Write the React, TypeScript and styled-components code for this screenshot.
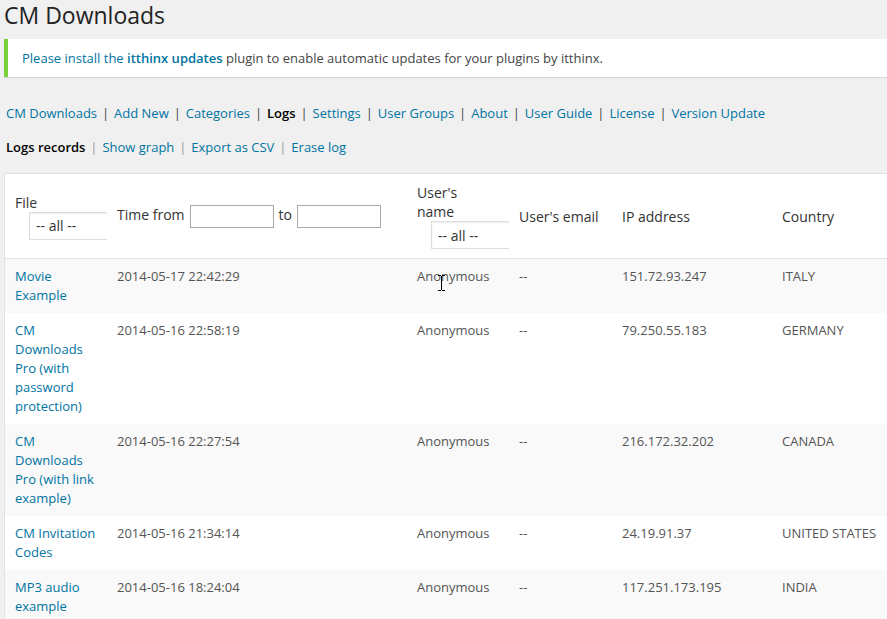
import React from "react";
import styled, { createGlobalStyle } from "styled-components";

const GlobalStyle = createGlobalStyle`
  *, *::before, *::after { box-sizing: border-box; }
  body {
    margin: 0;
    background: #f0f0f0;
    color: #444;
    font: 13px/19px "Open Sans", sans-serif;
    overflow: hidden;
  }
`;

const Page = styled.main`
  padding-left: 4px;
`;

const Title = styled.h1`
  margin: 0;
  padding-bottom: 8px;
  font-size: 23px;
  font-weight: 400;
  line-height: 31px;
  color: #222;
`;

const Link = styled.a`
  color: #0074a2;
  text-decoration: none;
  &:hover { color: #2ea2cc; }
`;

const Strong = styled.strong`
  font-weight: 600;
`;

const Notice = styled.p`
  margin: 0 0 27px;
  padding: 10px 14px 9px;
  border-left: 4px solid #7ad03a;
  background: #fff;
  box-shadow: 0 1px 1px rgba(0, 0, 0, 0.1);
`;

const Menu = styled.nav<{ $barColor: string }>`
  display: flex;
  margin: 0 2px 15px;
  color: ${(p) => p.$barColor};
`;

const Separator = styled.span`
  width: 17px;
  flex: none;
  text-align: center;
`;

const MenuLink = styled(Link)`
  white-space: nowrap;
  &[aria-current] {
    color: #000;
    font-weight: 600;
  }
`;

const LogTable = styled.table`
  width: 100%;
  margin-top: 16px;
  table-layout: fixed;
  border-spacing: 0;
  border: 1px solid #e1e1e1;
  border-right: 0;
  background: #fff;
`;

const Col = styled.col<{ $width?: number }>`
  width: ${(p) => (p.$width ? `${p.$width}px` : "auto")};
`;

const HeadCell = styled.th`
  overflow: hidden;
  padding: 9px 10px;
  border-bottom: 1px solid #e1e1e1;
  font-size: 14px;
  font-weight: 400;
  text-align: left;
  vertical-align: middle;
  color: #333;
`;

const Row = styled.tr`
  &:nth-child(odd) { background: #f9f9f9; }
`;

const Cell = styled.td`
  padding: 8px 10px;
  vertical-align: top;
  color: #555;
`;

const Filter = styled.select`
  display: block;
  appearance: none;
  width: 140px;
  height: 28px;
  margin-left: 14px;
  padding: 2px 6px;
  border: 1px solid #ddd;
  border-radius: 0;
  background: #fff;
  box-shadow: inset 0 1px 2px rgba(0, 0, 0, 0.07);
  font: inherit;
  color: #333;
`;

const TimeRange = styled.div`
  display: flex;
  align-items: center;
  gap: 5px;
  white-space: nowrap;
`;

const TimeLabel = styled.label`
  padding-bottom: 4px;
`;

const TimeInput = styled.input`
  width: 84px;
  height: 23px;
  padding: 1px 3px;
  border: 1px solid #a9a9a9;
  border-radius: 0;
  background: #fff;
  font: inherit;
`;

const Hovered = styled.span`
  position: relative;
`;

const TextCursor = styled.svg`
  position: absolute;
  left: 20px;
  top: 8px;
`;

const mainMenu = ["CM Downloads", "Add New", "Categories", "Logs", "Settings", "User Groups", "About", "User Guide", "License", "Version Update"];
const logMenu = ["Logs records", "Show graph", "Export as CSV", "Erase log"];

const records = [
  { file: "Movie Example", time: "2014-05-17 22:42:29", ip: "151.72.93.247", country: "ITALY" },
  { file: "CM Downloads Pro (with password protection)", time: "2014-05-16 22:58:19", ip: "79.250.55.183", country: "GERMANY" },
  { file: "CM Downloads Pro (with link example)", time: "2014-05-16 22:27:54", ip: "216.172.32.202", country: "CANADA" },
  { file: "CM Invitation Codes", time: "2014-05-16 21:34:14", ip: "24.19.91.37", country: "UNITED STATES" },
  { file: "MP3 audio example", time: "2014-05-16 18:24:04", ip: "117.251.173.195", country: "INDIA" },
];

function MenuBar({ items, current, barColor, label }: { items: string[]; current: string; barColor: string; label: string }) {
  return (
    <Menu $barColor={barColor} aria-label={label}>
      {items.map((item, i) => (
        <React.Fragment key={item}>
          {i > 0 && <Separator>|</Separator>}
          <MenuLink href="#" aria-current={item === current ? "page" : undefined}>{item}</MenuLink>
        </React.Fragment>
      ))}
    </Menu>
  );
}

export default function App() {
  return (
    <>
      <GlobalStyle />
      <Page>
        <Title>CM Downloads</Title>
        <Notice>
          <Link href="#">Please install the <Strong>itthinx updates</Strong></Link> plugin to enable automatic updates for your plugins by itthinx.
        </Notice>
        <MenuBar items={mainMenu} current="Logs" barColor="#444" label="Plugin" />
        <MenuBar items={logMenu} current="Logs records" barColor="#999" label="Logs" />
        <LogTable>
          <colgroup>
            <Col $width={102} />
            <Col $width={300} />
            <Col $width={102} />
            <Col $width={103} />
            <Col $width={160} />
            <Col />
          </colgroup>
          <thead>
            <tr>
              <HeadCell scope="col">
                <label htmlFor="file">File</label>
                <Filter id="file"><option>-- all --</option></Filter>
              </HeadCell>
              <HeadCell scope="col">
                <TimeRange>
                  <TimeLabel htmlFor="from">Time from</TimeLabel>
                  <TimeInput id="from" type="text" />
                  <TimeLabel htmlFor="to">to</TimeLabel>
                  <TimeInput id="to" type="text" />
                </TimeRange>
              </HeadCell>
              <HeadCell scope="col">
                <label htmlFor="user">User's<br />name</label>
                <Filter id="user"><option>-- all --</option></Filter>
              </HeadCell>
              <HeadCell scope="col">User's email</HeadCell>
              <HeadCell scope="col">IP address</HeadCell>
              <HeadCell scope="col">Country</HeadCell>
            </tr>
          </thead>
          <tbody>
            {records.map((r, i) => (
              <Row key={r.time}>
                <Cell><Link href="#">{r.file}</Link></Cell>
                <Cell>{r.time}</Cell>
                <Cell>
                  <Hovered>
                    Anonymous
                    {i === 0 && (
                      <TextCursor width="9" height="16" viewBox="0 0 9 16" aria-hidden="true">
                        <path d="M1 .5h3M5 .5h3M4.500 1v14M1 15.500h3M5 15.500h3" stroke="#000" fill="none" />
                      </TextCursor>
                    )}
                  </Hovered>
                </Cell>
                <Cell>--</Cell>
                <Cell>{r.ip}</Cell>
                <Cell>{r.country}</Cell>
              </Row>
            ))}
          </tbody>
        </LogTable>
      </Page>
    </>
  );
}
